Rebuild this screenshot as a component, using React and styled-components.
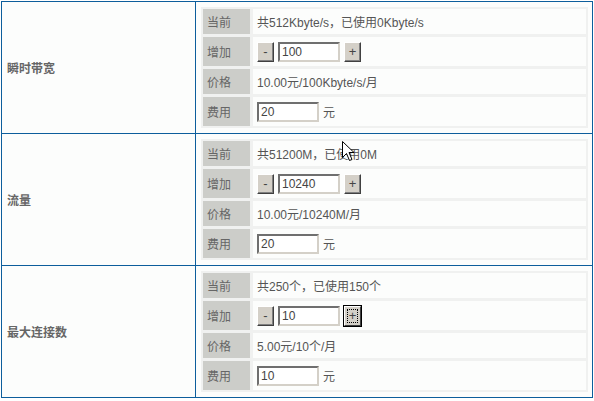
import React from "react";
import styled, { createGlobalStyle } from "styled-components";

const GlobalStyle = createGlobalStyle`
  html, body {
    margin: 0;
    padding: 0;
    background: #ffffff;
  }
  body {
    font-family: "Liberation Sans", "Noto Sans CJK SC", sans-serif;
    font-size: 12px;
    color: #555;
  }
`;

const sections = [
  {
    title: "瞬时带宽",
    current: "共512Kbyte/s，已使用0Kbyte/s",
    add: "100",
    price: "10.00元/100Kbyte/s/月",
    fee: "20",
  },
  {
    title: "流量",
    current: "共51200M，已使用0M",
    add: "10240",
    price: "10.00元/10240M/月",
    fee: "20",
  },
  {
    title: "最大连接数",
    current: "共250个，已使用150个",
    add: "10",
    price: "5.00元/10个/月",
    fee: "10",
    focused: true,
  },
];

const App = () => {
  return (
    <>
      <GlobalStyle />
      <Page>
        <Board>
          {sections.map((s, i) => (
            <Section key={i} $first={i === 0}>
              <Title>{s.title}</Title>
              <Body>
                <Panel>
                  <Label>当前</Label>
                  <Value>{s.current}</Value>
                  <Label $tall>增加</Label>
                  <Value $tall>
                    <Btn type="button">-</Btn>
                    <Field type="text" defaultValue={s.add} />
                    <Btn type="button" $focused={s.focused}>
                      +
                    </Btn>
                  </Value>
                  <Label>价格</Label>
                  <Value>{s.price}</Value>
                  <Label $tall>费用</Label>
                  <Value $tall>
                    <Field type="text" defaultValue={s.fee} />
                    <Unit>元</Unit>
                  </Value>
                </Panel>
              </Body>
            </Section>
          ))}
          <Cursor width="13" height="21" viewBox="0 0 13 21">
            <path
              d="M0.5 0.5 L0.5 16.5 L4.5 12.5 L7.5 19.5 L10 18.5 L7 11.5 L12 11.5 Z"
              fill="#fff"
              stroke="#000"
              strokeWidth="1"
            />
          </Cursor>
        </Board>
      </Page>
    </>
  );
};

const Page = styled.div`
  padding: 1px 0 0 1px;
`;

const Board = styled.div`
  position: relative;
  width: 590px;
  border: 1px solid #0d5e9c;
  background: #fcfdfc;
`;

const Section = styled.div`
  display: grid;
  grid-template-columns: 194px 1fr;
  border-top: ${(p) => (p.$first ? "none" : "1px solid #0d5e9c")};
`;

const Title = styled.div`
  display: flex;
  align-items: center;
  padding-left: 5px;
  border-right: 1px solid #0d5e9c;
  font-weight: bold;
  color: #666;
  font-size: 12px;
`;

const Body = styled.div`
  padding: 5px 4px 5px 5px;
`;

const Panel = styled.div`
  display: grid;
  grid-template-columns: 47px 1fr;
  gap: 3px;
  padding: 2px;
  background: #f0f1f0;
`;

const Label = styled.div`
  display: flex;
  align-items: center;
  height: ${(p) => (p.$tall ? "29px" : "25px")};
  padding-left: 4px;
  background: #cccdc9;
  color: #666;
`;

const Value = styled.div`
  display: flex;
  align-items: center;
  gap: 4px;
  height: ${(p) => (p.$tall ? "29px" : "25px")};
  padding-left: 4px;
  background: #fcfdfc;
  color: #555;
`;

const Btn = styled.button`
  width: 17px;
  height: 20px;
  padding: 0;
  margin: 0;
  font-family: "Liberation Sans", sans-serif;
  font-size: 13px;
  line-height: 14px;
  color: #444;
  background: #d4d0c8;
  border: 1px solid;
  border-color: #ffffff #404040 #404040 #ffffff;
  box-shadow: ${(p) =>
    p.$focused ? "0 0 0 1px #000" : "inset -1px -1px 0 #808080"};
  outline: ${(p) => (p.$focused ? "1px dotted #000" : "none")};
  outline-offset: -4px;
`;

const Field = styled.input`
  box-sizing: border-box;
  width: 62px;
  height: 20px;
  margin: 0;
  padding: 1px 2px;
  font-family: "Liberation Sans", sans-serif;
  font-size: 12px;
  color: #444;
  background: #fff;
  border: 2px solid;
  border-color: #6f6f6f #d4d0c8 #d4d0c8 #6f6f6f;
  outline: none;
`;

const Unit = styled.span`
  color: #555;
`;

const Cursor = styled.svg`
  position: absolute;
  left: 340px;
  top: 139px;
  pointer-events: none;
`;

export default App;
